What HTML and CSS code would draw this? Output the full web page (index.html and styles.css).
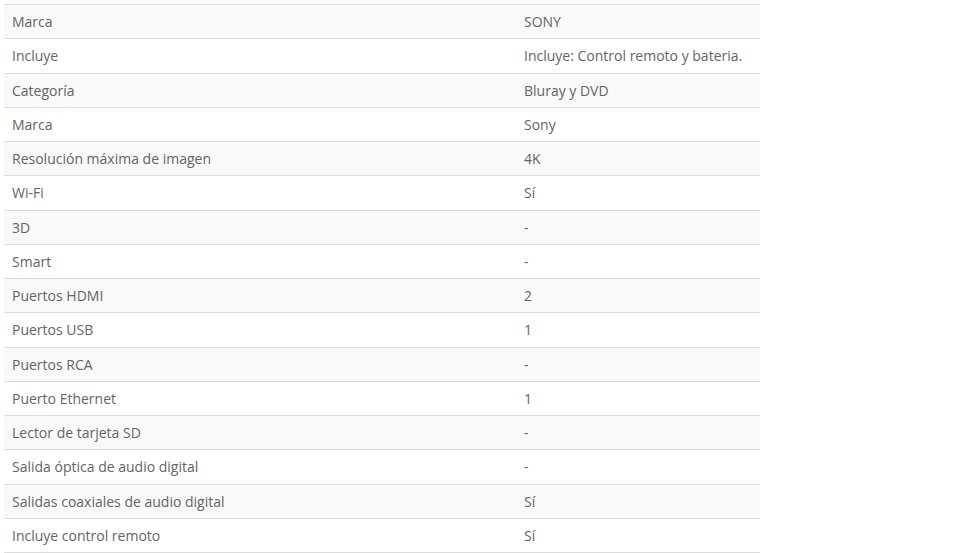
FILE: index.html
```html
<!DOCTYPE html>
<html lang="es">
<head>
<meta charset="utf-8">
<title>Especificaciones</title>
<link rel="stylesheet" href="styles.css">
</head>
<body>
<table class="specs">
  <tbody>
    <tr><td class="label">Marca</td><td class="value">SONY</td></tr>
    <tr><td class="label">Incluye</td><td class="value">Incluye: Control remoto y bateria.</td></tr>
    <tr><td class="label">Categoría</td><td class="value">Bluray y DVD</td></tr>
    <tr><td class="label">Marca</td><td class="value">Sony</td></tr>
    <tr><td class="label">Resolución máxima de imagen</td><td class="value">4K</td></tr>
    <tr><td class="label">Wi-Fi</td><td class="value">Sí</td></tr>
    <tr><td class="label">3D</td><td class="value">-</td></tr>
    <tr><td class="label">Smart</td><td class="value">-</td></tr>
    <tr><td class="label">Puertos HDMI</td><td class="value">2</td></tr>
    <tr><td class="label">Puertos USB</td><td class="value">1</td></tr>
    <tr><td class="label">Puertos RCA</td><td class="value">-</td></tr>
    <tr><td class="label">Puerto Ethernet</td><td class="value">1</td></tr>
    <tr><td class="label">Lector de tarjeta SD</td><td class="value">-</td></tr>
    <tr><td class="label">Salida óptica de audio digital</td><td class="value">-</td></tr>
    <tr><td class="label">Salidas coaxiales de audio digital</td><td class="value">Sí</td></tr>
    <tr><td class="label">Incluye control remoto</td><td class="value">Sí</td></tr>
  </tbody>
</table>
</body>
</html>
```

FILE: styles.css
```css
html, body {
  background: #ffffff;
}
body {
  margin: 4px;
  font-family: "Open Sans", "Noto Sans", Arial, sans-serif;
  font-size: 14px;
  color: #646464;
}
.specs {
  width: 756px;
  border-collapse: collapse;
  border-spacing: 0;
  border-bottom: 1px solid #dddddd;
}
.specs td {
  padding: 8px;
  line-height: 17.25px;
  border-top: 1px solid #dddddd;
  vertical-align: top;
  text-align: left;
}
.specs tr:nth-child(odd) td {
  background: #f9f9f9;
}
.specs .label {
  width: 496px;
}
```
